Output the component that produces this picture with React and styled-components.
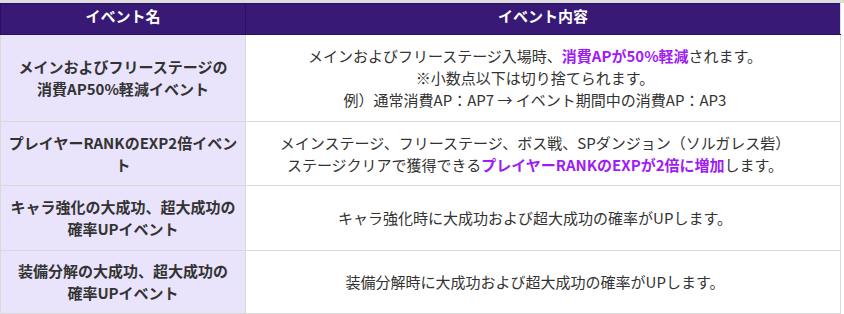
import styled, { createGlobalStyle } from 'styled-components';

const GlobalStyle = createGlobalStyle`
	body {
		margin: 0;
		background: #ffffff;
		font-family: "Noto Sans CJK JP", sans-serif;
	}
`;

const Page = styled.div`
	width: 844px;
	height: 314px;
	border-top: 3px solid #dddddd;
	box-sizing: border-box;
`;

const Table = styled.table`
	width: 841px;
	border-collapse: collapse;
	table-layout: fixed;
	color: #333333;
	font-size: 15px;
	line-height: 22px;
`;

const HeadCell = styled.th`
	height: 29px;
	padding: 1px 0 0;
	background: #381a76;
	border: 1px solid #2a1160;
	border-right-color: ${props => (props.$last ? '#dddddd' : '#2a1160')};
	color: #ffffff;
	font-weight: 700;
	font-size: 15px;
	line-height: 22px;
	vertical-align: top;
	text-align: center;
`;

const NameCell = styled.td`
	height: ${props => props.$h}px;
	box-sizing: border-box;
	padding: 0 4px;
	background: #e9e3fb;
	border: 1px solid #d9d9d9;
	font-weight: 700;
	text-align: center;
	vertical-align: middle;
`;

const BodyCell = styled.td`
	padding: 0 24px 0 8px;
	background: #ffffff;
	border: 1px solid #d9d9d9;
	text-align: center;
	vertical-align: middle;
`;

const Mark = styled.span`
	color: #a11cf4;
	font-weight: 700;
`;

const rows = [
	{
		h: 87,
		name: ['メインおよびフリーステージの', '消費AP50%軽減イベント'],
		body: [
			'メインおよびフリーステージ入場時、**消費APが50%軽減**されます。',
			'※小数点以下は切り捨てられます。',
			'例）通常消費AP：AP7 → イベント期間中の消費AP：AP3',
		],
	},
	{
		h: 64,
		name: ['プレイヤーRANKのEXP2倍イベント'],
		body: [
			'メインステージ、フリーステージ、ボス戦、SPダンジョン（ソルガレス砦）',
			'ステージクリアで獲得できる**プレイヤーRANKのEXPが2倍に増加**します。',
		],
	},
	{
		h: 65,
		name: ['キャラ強化の大成功、超大成功の', '確率UPイベント'],
		body: ['キャラ強化時に大成功および超大成功の確率がUPします。'],
	},
	{
		h: 63,
		name: ['装備分解の大成功、超大成功の', '確率UPイベント'],
		body: ['装備分解時に大成功および超大成功の確率がUPします。'],
	},
];

// "**text**" marks the purple highlighted part of a line
const Rich = ({ text }) =>
	text.split('**').map((part, i) =>
		i % 2 ? <Mark key={i}>{part}</Mark> : <span key={i}>{part}</span>
	);

const Lines = ({ items }) =>
	items.map((line, i) => (
		<span key={i}>
			{i > 0 && <br />}
			<Rich text={line} />
		</span>
	));

const App = () => (
	<>
		<GlobalStyle />
		<Page>
			<Table>
				<colgroup>
					<col style={{ width: 245 }} />
					<col />
				</colgroup>
				<thead>
					<tr>
						<HeadCell>イベント名</HeadCell>
						<HeadCell $last>イベント内容</HeadCell>
					</tr>
				</thead>
				<tbody>
					{rows.map((row, i) => (
						<tr key={i}>
							<NameCell $h={row.h}>
								<Lines items={row.name} />
							</NameCell>
							<BodyCell>
								<Lines items={row.body} />
							</BodyCell>
						</tr>
					))}
				</tbody>
			</Table>
		</Page>
	</>
);

export default App;
